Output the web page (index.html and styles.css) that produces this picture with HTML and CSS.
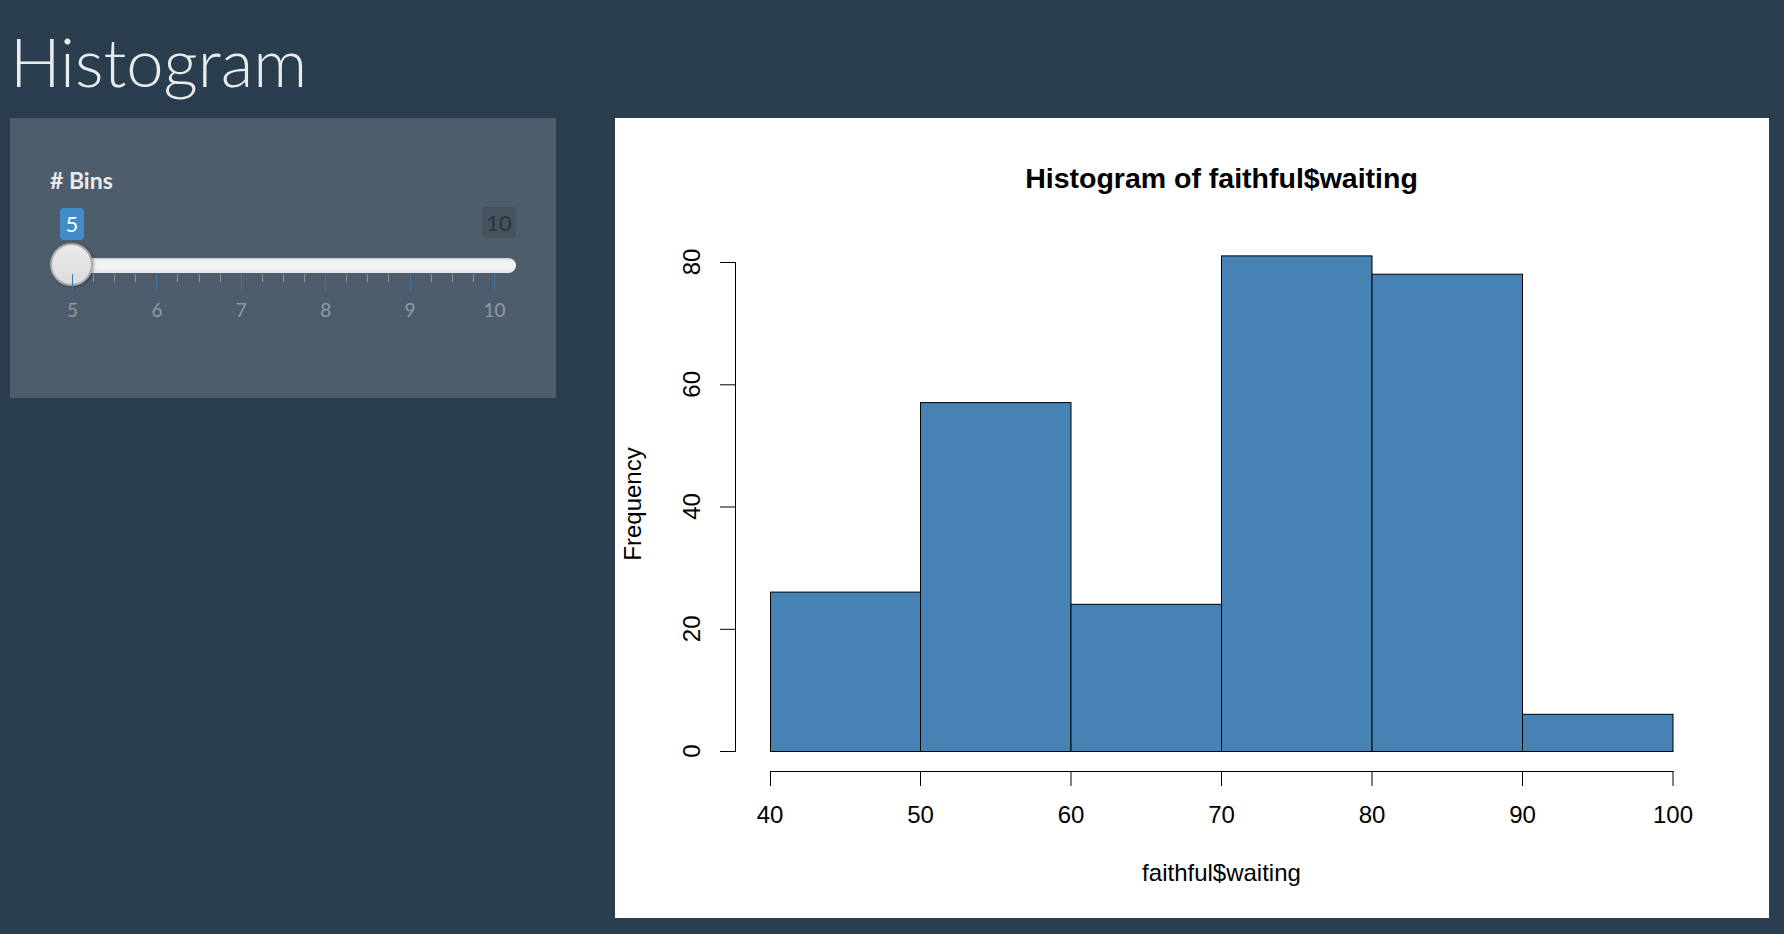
FILE: index.html
```html
<!DOCTYPE html>
<html>
<head>
    <title>Histogram</title>
    <link rel="stylesheet" href="styles.css">
</head>
<body>
    <h1 class="page-title">Histogram</h1>

    <div class="layout">
        <!-- sidebar with the bins slider -->
        <div class="well">
            <label class="control-label"># Bins</label>
            <div class="slider">
                <span class="badge badge-from">5</span>
                <span class="badge badge-max">10</span>
                <div class="track"></div>
                <div class="handle"></div>
                <div class="grid-ticks">
                    <span class="tick major"></span><span class="tick"></span><span class="tick"></span><span class="tick"></span>
                    <span class="tick major"></span><span class="tick"></span><span class="tick"></span><span class="tick"></span>
                    <span class="tick major"></span><span class="tick"></span><span class="tick"></span><span class="tick"></span>
                    <span class="tick major"></span><span class="tick"></span><span class="tick"></span><span class="tick"></span>
                    <span class="tick major"></span><span class="tick"></span><span class="tick"></span><span class="tick"></span>
                    <span class="tick major"></span>
                </div>
                <div class="grid-labels">
                    <span>5</span><span>6</span><span>7</span><span>8</span><span>9</span><span>10</span>
                </div>
            </div>
        </div>

        <!-- plot output -->
        <div class="plot">
            <svg width="1154" height="800" viewBox="615 118 1154 800">
                <rect x="615" y="118" width="1154" height="800" fill="#fff"/>
                <text class="main-title" x="1221.5" y="187.5" text-anchor="middle">Histogram of faithful$waiting</text>

                <g class="bars">
                    <rect x="770.5" y="592.1" width="150" height="159.4"/>
                    <rect x="920.5" y="402.6" width="150.5" height="348.9"/>
                    <rect x="1071" y="604.3" width="150.5" height="147.2"/>
                    <rect x="1221.5" y="255.9" width="150.5" height="495.6"/>
                    <rect x="1372" y="274.2" width="150.5" height="477.3"/>
                    <rect x="1522.5" y="714.3" width="150.5" height="37.2"/>
                </g>

                <g class="axis">
                    <path d="M735.5 751 V262 M720 751.5 H736 M720 629.3 H736 M720 507 H736 M720 384.8 H736 M720 262.5 H736"/>
                    <path d="M770 771.5 H1673.5 M770.5 771 V786 M920.5 771 V786 M1071 771 V786 M1221.5 771 V786 M1372 771 V786 M1522.5 771 V786 M1673 771 V786"/>
                </g>

                <g class="tick-labels">
                    <text transform="translate(700,751) rotate(-90)" text-anchor="middle">0</text>
                    <text transform="translate(700,628.8) rotate(-90)" text-anchor="middle">20</text>
                    <text transform="translate(700,506.5) rotate(-90)" text-anchor="middle">40</text>
                    <text transform="translate(700,384.3) rotate(-90)" text-anchor="middle">60</text>
                    <text transform="translate(700,262) rotate(-90)" text-anchor="middle">80</text>

                    <text x="770" y="823" text-anchor="middle">40</text>
                    <text x="920.5" y="823" text-anchor="middle">50</text>
                    <text x="1071" y="823" text-anchor="middle">60</text>
                    <text x="1221.5" y="823" text-anchor="middle">70</text>
                    <text x="1372" y="823" text-anchor="middle">80</text>
                    <text x="1522.5" y="823" text-anchor="middle">90</text>
                    <text x="1673" y="823" text-anchor="middle">100</text>

                    <text x="1221.5" y="881" text-anchor="middle">faithful$waiting</text>
                    <text transform="translate(641,504) rotate(-90)" text-anchor="middle">Frequency</text>
                </g>
            </svg>
        </div>
    </div>
</body>
</html>
```

FILE: styles.css
```css
body {
    margin: 0;
    padding: 21px 15px 0 10px;
    background-color: #2b3e50;
    color: #ebebeb;
    font-family: Lato, "Open Sans", sans-serif;
}

.page-title {
    margin: 0 0 17px;
    font-size: 67px;
    font-weight: 300;
    line-height: 80px;
    color: #ebebeb;
}

.layout {
    display: flex;
    align-items: flex-start;
    gap: 59px;
}

/* sidebar */
.well {
    box-sizing: border-box;
    width: 546px;
    height: 280px;
    padding: 47px 0 0 40px;
    background-color: #4e5d6c;
}

.control-label {
    display: block;
    margin-bottom: 13px;
    font-size: 23px;
    font-weight: 700;
    line-height: 30px;
}

.slider {
    position: relative;
    width: 466px;
    height: 112px;
}

.badge {
    position: absolute;
    top: 0;
    box-sizing: border-box;
    border-radius: 4px;
    font-size: 22px;
    line-height: 32px;
    text-align: center;
}

.badge-from {
    left: 10px;
    width: 24px;
    height: 32px;
    background-color: #428bca;
    color: #fff;
}

.badge-max {
    top: -1px;
    left: 432px;
    width: 34px;
    height: 31px;
    line-height: 31px;
    background-color: #45535f;
    color: #2c333a;
}

.track {
    position: absolute;
    top: 50px;
    left: 22px;
    width: 444px;
    height: 15px;
    border-radius: 8px;
    background: linear-gradient(#c9c9c9 0, #eeeeee 15%, #f6f6f6 55%, #e6e6e6 100%);
}

.handle {
    position: absolute;
    top: 35px;
    left: 0;
    box-sizing: border-box;
    width: 43px;
    height: 43px;
    border: 2px solid #a9a9a9;
    border-radius: 50%;
    background: linear-gradient(#e9e9e9, #dcdcdc);
    box-shadow: 1px 1px 3px rgba(0, 0, 0, 0.35);
}

.grid-ticks {
    position: absolute;
    top: 66px;
    left: 22px;
    width: 423px;
    display: flex;
    justify-content: space-between;
    align-items: flex-start;
}

.tick {
    width: 1px;
    height: 8px;
    background-color: #8c9196;
}

.tick.major {
    height: 16px;
    background-color: #3f74a8;
}

.grid-labels {
    position: absolute;
    top: 92px;
    left: 22px;
    width: 423px;
    display: flex;
    justify-content: space-between;
    font-size: 19px;
    line-height: 19px;
    color: #8e9aa6;
}

.grid-labels span {
    display: flex;
    justify-content: center;
    width: 1px;
    white-space: nowrap;
}

/* plot */
.plot {
    width: 1154px;
    height: 800px;
    background-color: #fff;
}

.plot svg {
    display: block;
    font-family: "Liberation Sans", Arial, sans-serif;
}

.main-title {
    font-size: 28.5px;
    font-weight: 700;
    fill: #000;
}

.bars rect {
    fill: #4682b4;
    stroke: #000;
    stroke-width: 1;
}

.axis path {
    fill: none;
    stroke: #000;
    stroke-width: 1;
}

.tick-labels text {
    font-size: 24px;
    fill: #000;
}
```
